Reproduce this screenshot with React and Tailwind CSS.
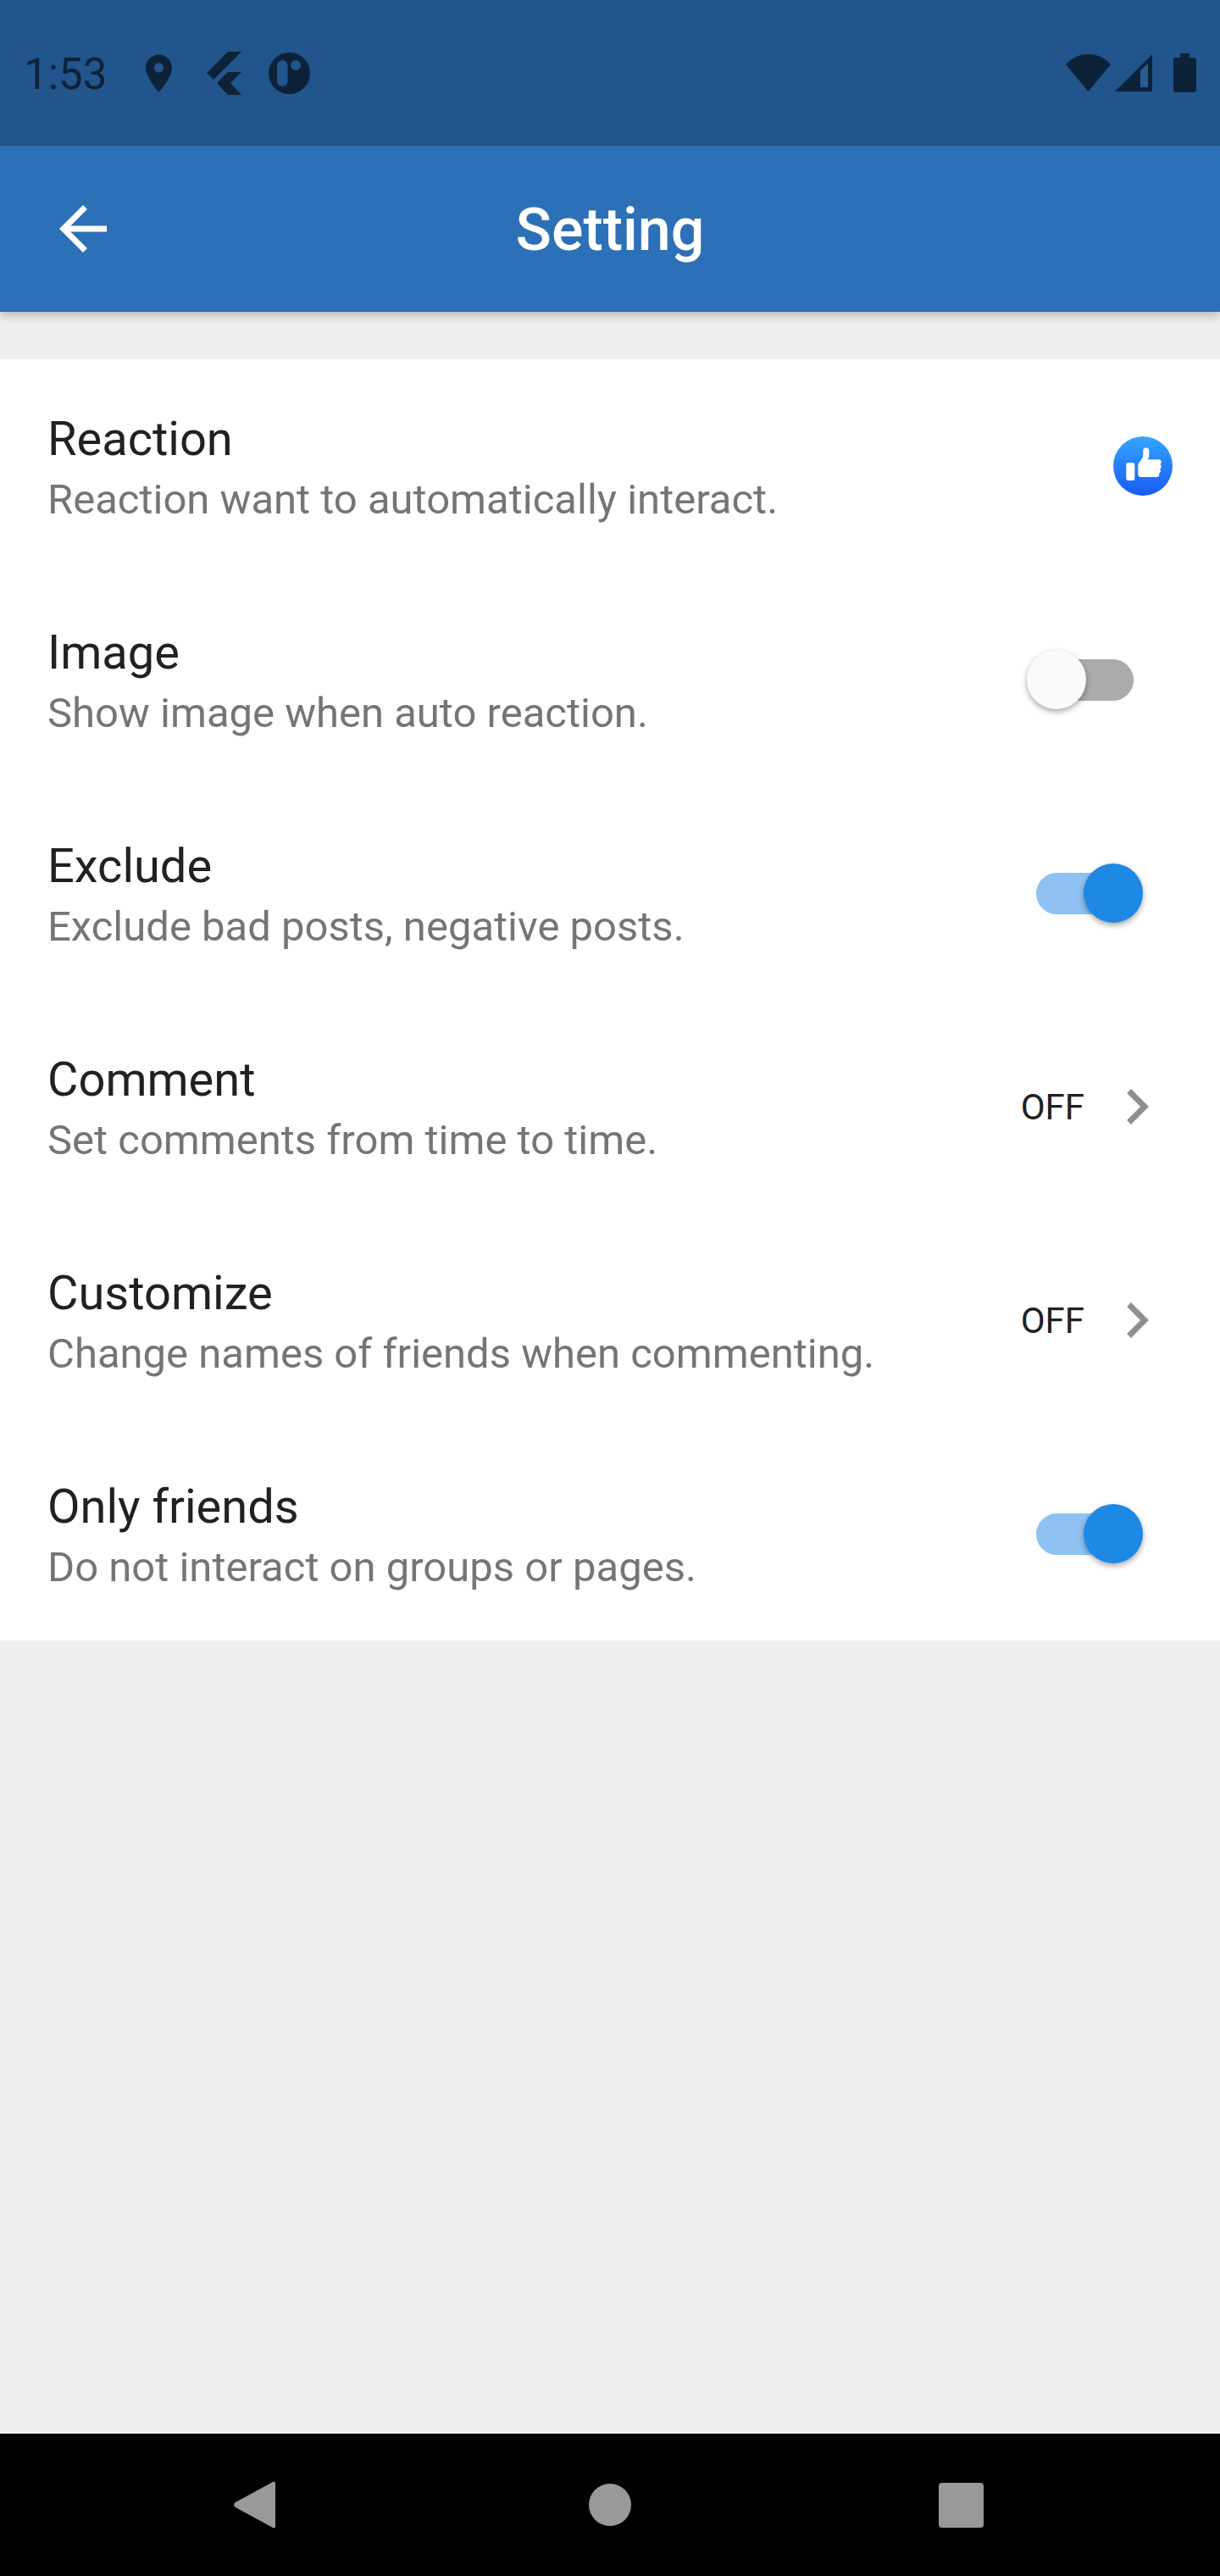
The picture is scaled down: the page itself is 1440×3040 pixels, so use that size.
const rows = [
  { title: 'Reaction', sub: 'Reaction want to automatically interact.', kind: 'like' },
  { title: 'Image', sub: 'Show image when auto reaction.', kind: 'off' },
  { title: 'Exclude', sub: 'Exclude bad posts, negative posts.', kind: 'on' },
  { title: 'Comment', sub: 'Set comments from time to time.', kind: 'link' },
  { title: 'Customize', sub: 'Change names of friends when commenting.', kind: 'link' },
  { title: 'Only friends', sub: 'Do not interact on groups or pages.', kind: 'on' },
]

function StatusBar() {
  return (
    <div className="h-[172px] bg-[#21558b] flex items-center pl-[28px] pr-[28px] text-[#0d2238]">
      <span className="text-[51px] w-[133px] pt-[5px]">1:53</span>
      <svg width="53" height="53" viewBox="0 0 24 24" fill="currentColor">
        <path d="M12 2C8.13 2 5 5.13 5 9c0 5.25 7 13 7 13s7-7.75 7-13c0-3.87-3.13-7-7-7zm0 9.5c-1.38 0-2.5-1.12-2.5-2.5s1.12-2.5 2.5-2.5 2.5 1.12 2.5 2.5-1.12 2.5-2.5 2.5z" />
      </svg>
      <svg className="ml-[30px]" width="41" height="51" viewBox="0 0 41 51" fill="currentColor">
        <path d="M41 0H25L0 25l8 8zM41 24H25L12 37l13 14h16L28 37z" />
      </svg>
      <svg className="ml-[32px]" width="49" height="49" viewBox="0 0 49 49">
        <circle cx="24.5" cy="24.5" r="24.5" fill="currentColor" />
        <rect x="10" y="9" width="12.500" height="31" rx="6.250" fill="#21558b" />
        <circle cx="32" cy="15" r="6" fill="#21558b" />
      </svg>
      <div className="ml-auto flex items-center">
        <svg width="53" height="44" viewBox="0 0 53 44" fill="currentColor">
          <path d="M0 12C7 4 16 0 26.5 0S46 4 53 12L26.5 44z" />
        </svg>
        <svg className="ml-[5px]" width="44" height="44" viewBox="0 0 44 44">
          <path d="M44 0L0 44h44z" fill="currentColor" />
          <path d="M39 11l-9 8v20h9z" fill="#285c93" />
        </svg>
        <svg className="ml-[25px]" width="27" height="46" viewBox="0 0 27 46" fill="currentColor">
          <path d="M8 0h11v5h5a3 3 0 0 1 3 3v35a3 3 0 0 1-3 3H3a3 3 0 0 1-3-3V8a3 3 0 0 1 3-3h5z" />
        </svg>
      </div>
    </div>
  )
}

function Toggle({ on }) {
  return (
    <div className="relative w-[137px] h-[70px] mr-[91px]">
      <div className={`absolute left-[11px] top-[11px] w-[115px] h-[49px] rounded-full ${on ? 'bg-[#8fc2f3]' : 'bg-[#ababab]'}`} />
      <div className={`absolute top-0 w-[70px] h-[70px] rounded-full shadow-[0_3px_7px_rgba(0,0,0,0.35)] ${on ? 'right-0 bg-[#1e88e5]' : 'left-0 bg-[#fafafa]'}`} />
    </div>
  )
}

function LikeIcon() {
  return (
    <svg className="mr-[56px]" width="70" height="70" viewBox="0 0 70 70">
      <defs>
        <linearGradient id="like" x1="0" y1="0" x2="0" y2="1">
          <stop offset="0" stopColor="#35a5ff" />
          <stop offset="1" stopColor="#1a5af5" />
        </linearGradient>
      </defs>
      <circle cx="35" cy="35" r="35" fill="url(#like)" />
      <rect x="15.300" y="31" width="10" height="21" rx="2.500" fill="#fff" />
      <path d="M29.300 34c0-2 1.500-3.500 3.500-6 2-2.500 2.500-4 2.500-6v-5c0-2.200 1.300-3.700 3.300-3.700s3.700 1.500 3.700 3.700v6c0 1.700-.8 3-1.700 4.300h13.200c1.700 0 2.900 1.200 2.900 2.800 0 1.200-.5 2.200-1.200 2.900.8.700 1.200 1.600 1.200 2.600 0 1.300-.7 2.400-1.700 3 .5.600.8 1.400.8 2.200 0 1.300-.8 2.400-1.800 2.900.2.400.3.800.3 1.300 0 2-1.300 3-3.300 3H33c-2.300 0-3.700-1.400-3.700-3.500z" fill="#fff" />
    </svg>
  )
}

function OffLink() {
  return (
    <div className="flex items-center mr-[56px]">
      <span className="text-[42px] text-[#212121] mr-[20px]">OFF</span>
      <svg width="84" height="84" viewBox="0 0 24 24" fill="#8f8f8f">
        <path d="M10 6L8.59 7.41 13.17 12l-4.58 4.59L10 18l6-6z" />
      </svg>
    </div>
  )
}

export default function App() {
  return (
    <div className="w-[1440px] h-[3040px] flex flex-col bg-[#efefef] font-['Roboto',sans-serif]">
      <StatusBar />

      <div className="relative z-10 h-[196px] bg-[#2c70b7] flex items-center shadow-[0_5px_10px_rgba(0,0,0,0.22)]">
        <svg className="ml-[56px]" width="84" height="84" viewBox="0 0 24 24" fill="#fff">
          <path d="M20 11H7.83l5.59-5.59L12 4l-8 8 8 8 1.41-1.41L7.83 13H20v-2z" />
        </svg>
        <div className="flex-1 text-center text-white text-[70px] font-medium pt-[3px]">Setting</div>
        <div className="w-[140px]" />
      </div>

      <div className="mt-[56px] bg-white">
        {rows.map(r => (
          <div key={r.title} className="h-[252px] flex items-center justify-between pl-[56px]">
            <div className="pt-[5px]">
              <div className="text-[56px] leading-[74px] text-[#212121]">{r.title}</div>
              <div className="text-[49px] leading-[70px] text-[#757575]">{r.sub}</div>
            </div>
            {r.kind === 'like' && <LikeIcon />}
            {r.kind === 'off' && <Toggle on={false} />}
            {r.kind === 'on' && <Toggle on />}
            {r.kind === 'link' && <OffLink />}
          </div>
        ))}
      </div>

      <div className="mt-auto h-[168px] bg-black flex items-center pl-[276px]">
        <svg className="mr-[370px]" width="49" height="56" viewBox="0 0 49 56" fill="#999999">
          <path d="M46 1c1.500-1 3-.5 3 2v50c0 2.500-1.500 3-3 2L2 31c-2.500-1.500-2.500-4.500 0-6z" />
        </svg>
        <div className="w-[50px] h-[50px] rounded-full bg-[#999999] mr-[363px]" />
        <div className="w-[53px] h-[53px] rounded-[4px] bg-[#999999]" />
      </div>
    </div>
  )
}
